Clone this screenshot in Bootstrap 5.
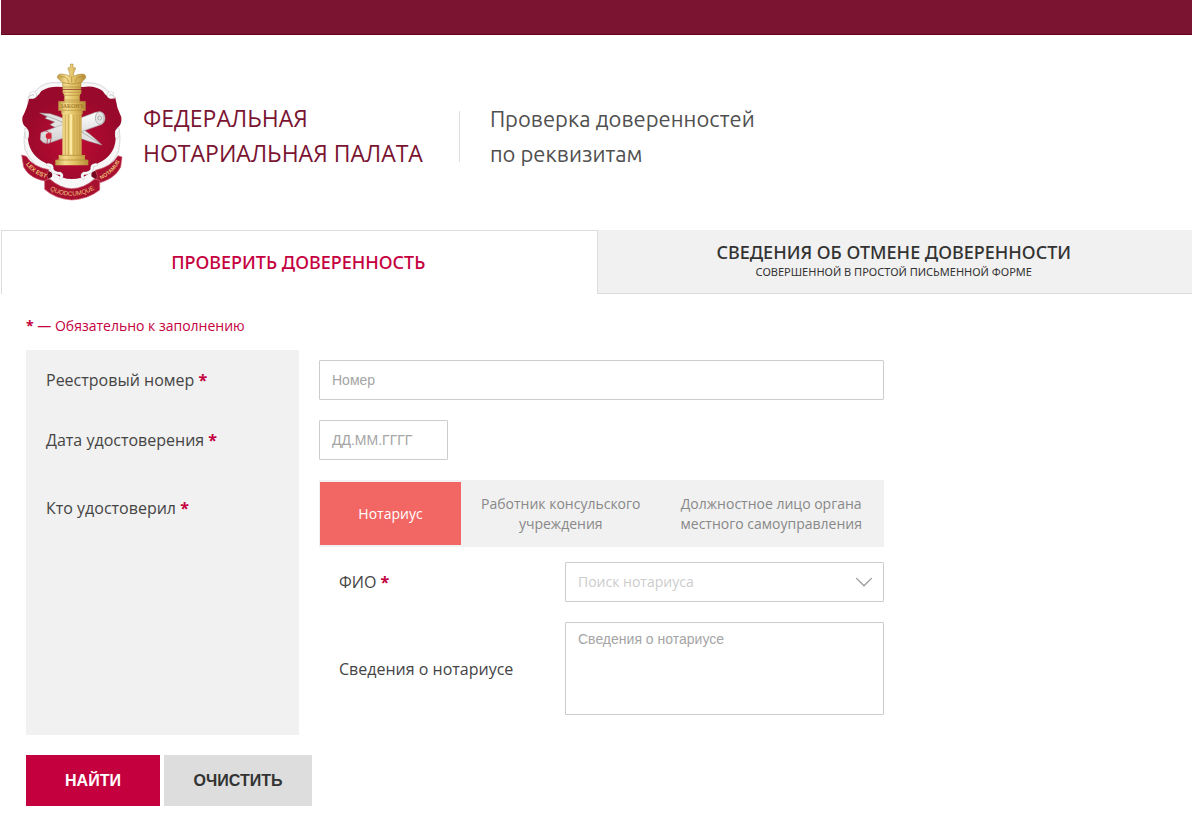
<!DOCTYPE html>
<html lang="ru">
<head>
<meta charset="utf-8">
<meta name="viewport" content="width=device-width, initial-scale=1">
<title>Проверка доверенностей по реквизитам</title>
<link href="https://cdn.jsdelivr.net/npm/bootstrap@5.3.0/dist/css/bootstrap.min.css" rel="stylesheet">
<style>
  body { font-family: "Open Sans", "Noto Sans", sans-serif; color: #444; font-size: 16px; line-height: 20px; }
  .page { margin: 0 8px 0 1px; }
  .topbar { height: 35px; background: #7a1431; border-bottom: 1px solid #69001f; }
  .site-header { padding: 28px 19px 29px; }
  .crest { width: 104px; height: 138px; flex: none; }
  .heading { padding-top: 8px; margin-left: 19px; }
  .brand { color: #7a1431; font-size: 23px; line-height: 35px; padding-right: 36px; }
  .brand:hover { color: #7a1431; }
  .rule { width: 1px; height: 51px; background: #ddd; }
  .page-title { font-family: Ubuntu, "Noto Sans", sans-serif; font-size: 22px; line-height: 35px; font-weight: 400; color: #505050; margin-left: 30px; }
  .top-tabs .nav-link { min-height: 64px; padding: 0 2px 2px 0; color: #333; background: #f1f1f1; border: solid #ddd; border-width: 0 0 1px 1px; border-radius: 0; font-family: "Noto Sans", sans-serif; font-size: 18px; line-height: 22px; font-weight: 500; }
  .top-tabs .nav-link.active { color: #c5003e; background: #fff; border-width: 1px 0 0 1px; }
  .top-tabs .note { font-size: 11px; line-height: 18px; font-weight: 400; }
  .content { padding: 0 25px; }
  .hint { color: #c5003e; font-size: 14px; padding: 22px 0 14px; }
  .req { color: #c5003e; font-weight: 700; }
  .side-label { width: 273px; padding: 0 20px; background: #f1f1f1; flex: none; }
  .side-label label, .side-label span.caption { display: block; padding: 20px 0; }
  .fields { width: 565px; margin-left: 20px; padding: 10px 0 20px; }
  .fields .form-control, .fields .form-select { border: 1px solid #ccc; border-radius: 1px; font-family: "Liberation Sans", sans-serif; font-size: 14px; line-height: 20px; padding: 9px 12px; color: #444; }
  .fields .form-control::placeholder { color: #a5a5a5; }
  .fields .date-box { width: 129px; margin: 20px 0; }
  .fields .form-select { font-family: "Open Sans", sans-serif; color: #ccc; background-image: url("data:image/svg+xml,%3Csvg xmlns='http://www.w3.org/2000/svg' viewBox='0 0 16 10'%3E%3Cpath d='M1 1l7 7 7-7' fill='none' stroke='%23999' stroke-width='1.2'/%3E%3C/svg%3E"); background-size: 18px 11px; background-position: right 10px center; }
  .who { background: #f1f1f1; padding: 2px 1px; min-height: 67px; margin-bottom: 15px; }
  .who .btn { border: 0; border-radius: 0; font-size: 14px; line-height: 20px; color: #888; padding: 0 20px; flex: none; }
  .who .btn.active { background: #f26664; color: #fff; width: 141px; }
  .sub-label { width: 246px; padding-left: 20px; flex: none; }
  .info-row { margin-top: 20px; }
  .fields textarea.form-control { height: 93px; padding-top: 6px; resize: none; }
  .actions { padding: 20px 0 25px; }
  .actions .btn { border: 0; border-radius: 0; height: 51px; font: bold 16px/20px "Liberation Sans", sans-serif; background: #ddd; color: #333; width: 148px; }
  .actions .btn.find { background: #c5003e; color: #fff; width: 134px; }
</style>
</head>
<body>
<div class="page">
  <div class="topbar"></div>
  <header class="site-header d-flex align-items-center">
    <svg class="crest" viewBox="60 40 312 414" role="img" aria-label="Герб">
      <defs>
        <linearGradient id="gold"><stop offset="0" stop-color="#c09a45"/><stop offset=".3" stop-color="#f3dc8c"/><stop offset=".6" stop-color="#e0bf62"/><stop offset="1" stop-color="#b58c35"/></linearGradient>
        <radialGradient id="wine" cy=".6"><stop offset="0" stop-color="#c00c34"/><stop offset="1" stop-color="#98092b"/></radialGradient>
        <linearGradient id="silver" x2="0" y2="1"><stop offset="0" stop-color="#fff"/><stop offset="1" stop-color="#cfcfcf"/></linearGradient>
        <path id="arcL" d="M72 334Q90 372 148 389"/>
        <path id="arcC" d="M142 417Q215 461 292 415"/>
        <path id="arcR" d="M290 395Q344 374 366 322"/>
      </defs>
      <!-- shield and its scrolled frame -->
      <path d="M85 140Q100 136 110 120Q134 96 168 99H262Q298 98 322 122Q334 138 346 142L356 236Q364 262 356 304Q336 350 292 372Q268 415 215 420Q164 415 140 370Q96 345 75 300Q68 262 78 236Z" fill="#f7f7f7" stroke="#c4c4c4" stroke-width="2"/>
      <path d="M87 148Q112 147 124 124Q148 108 187 112H250Q284 106 308 124Q322 148 346 146Q350 175 364 203Q366 226 352 234Q341 246 347 268Q344 318 294 341Q275 350 266 372Q246 388 215 388Q184 387 166 372Q156 350 138 341Q90 318 84 270Q91 246 80 234Q65 226 67 203Q82 174 87 148Z" fill="url(#wine)"/>
      <g fill="none" stroke-linecap="round">
        <path d="M93 142q14 3 13-8-5-7-13-2M338 142q-14 3-13-8 5-7 13-2M77 240q8 8 3 22M354 240q-8 8-3 22M144 345q14 0 12 14 5 12 24 12 9 5 3 14M288 345q-14 0-12 14-5 12-24 12-9 5-3 14" stroke="#bbb" stroke-width="9"/>
        <path d="M93 142q14 3 13-8-5-7-13-2M338 142q-14 3-13-8 5-7 13-2M77 240q8 8 3 22M354 240q-8 8-3 22M144 345q14 0 12 14 5 12 24 12 9 5 3 14M288 345q-14 0-12 14-5 12-24 12-9 5-3 14" stroke="#fafafa" stroke-width="7"/>
      </g>
      <!-- quill and scroll -->
      <path d="M119 190L150 192Q235 215 306 286Q220 264 150 225L164 217L135 206L142 201Z" fill="#e2e2e2" stroke="#999" stroke-width="1.500"/>
      <path d="M128 194Q220 226 300 282" fill="none" stroke="#999" stroke-width="2"/>
      <path d="M123 249L287 188Q307 183 313 196Q319 213 306 224L145 281Q129 283 121 269Z" fill="url(#silver)" stroke="#aaa" stroke-width="2"/>
      <ellipse cx="299" cy="205" rx="13" ry="19" fill="#e4e4e4" stroke="#999" stroke-width="2"/>
      <circle cx="299" cy="205" r="6" fill="none" stroke="#999" stroke-width="2"/>
      <path d="M134 242l22 11M143 261l-2 22 8 4 5-25" fill="none" stroke="#b31533" stroke-width="2"/>
      <circle cx="146" cy="259" r="9" fill="#d12439"/>
      <!-- crowned column -->
      <path d="M188 100L172 84Q172 72 185 73Q202 74 209 80V70q-5-4 0-9h-5v-7h7v-11h8v11h7v7h-5q5 5 0 9v10Q232 73 246 73Q259 73 257 85L243 100V119H188Z" fill="url(#gold)" stroke="#a98236" stroke-width="1.500"/>
      <path d="M180 82q20-6 26 16M251 82q-20-6-26 16M215 80v18M188 99q28 8 55 0M190 112h52" fill="none" stroke="#ab8338" stroke-width="2"/>
      <path d="M188 121h56v9l-5 7v18h18v28h-9v11h-64v-11h-9v-28h18v-19l-5-7Z" fill="url(#gold)"/>
      <path d="M188 128h56M190 137h50M191 151h50M175 157h81M177 182h78" fill="none" stroke="#b58c3c" stroke-width="2"/>
      <text x="216" y="176" text-anchor="middle" font-family="Liberation Serif, serif" font-size="17" font-weight="bold" fill="#a47a2a">ЗАКОНЪ</text>
      <path d="M187 190h58v126h10v14h10v17H166v-17h10v-14h11Z" fill="url(#gold)"/>
      <path d="M196 194v122M205 194v122M222 194v122M231 194v122M239 194v122" stroke="#c09a45" stroke-width="2"/>
      <path d="M213 194v122" stroke="#fff0ae" stroke-width="5"/>
      <path d="M180 317h72M172 331h88" stroke="#b08638" stroke-width="2"/>
      <!-- motto ribbon -->
      <path d="M139 362q22 4 17 19l-22 14M291 362q-22 4-16 19l23 14" fill="#75051e"/>
      <path d="M65 316L79 320Q98 352 147 360L140 377 148 396Q90 390 71 352ZM366 322L354 318Q336 350 286 362L292 378 288 402Q344 390 362 352Z" fill="#a81030" stroke="#cf5c6f" stroke-width="2"/>
      <path d="M134 392L149 388Q181 416 215 417Q253 416 284 388L299 392V421Q263 449 215 451Q164 447 134 419Z" fill="#a81030" stroke="#cf5c6f" stroke-width="2"/>
      <g font-family="Liberation Sans, sans-serif" font-size="19" fill="#f0c478" text-anchor="middle">
        <text font-size="18" font-weight="bold"><textPath href="#arcL" startOffset="50%">LEX EST</textPath></text>
        <text><textPath href="#arcC" startOffset="50%">QUODCUMQUE</textPath></text>
        <text font-size="16" font-weight="bold"><textPath href="#arcR" startOffset="50%">NOTAMUS</textPath></text>
      </g>
    </svg>
    <div class="heading d-flex align-items-center">
      <a class="brand text-decoration-none" href="#">ФЕДЕРАЛЬНАЯ<br>НОТАРИАЛЬНАЯ ПАЛАТА</a>
      <div class="rule"></div>
      <h1 class="page-title mb-0">Проверка доверенностей<br>по реквизитам</h1>
    </div>
  </header>

  <nav class="top-tabs nav nav-justified">
    <a class="nav-link active w-50 d-flex align-items-center justify-content-center" href="#">ПРОВЕРИТЬ ДОВЕРЕННОСТЬ</a>
    <a class="nav-link w-50 d-flex flex-column align-items-center justify-content-center" href="#">СВЕДЕНИЯ ОБ ОТМЕНЕ ДОВЕРЕННОСТИ<span class="note">СОВЕРШЕННОЙ В ПРОСТОЙ ПИСЬМЕННОЙ ФОРМЕ</span></a>
  </nav>

  <form class="content">
    <div class="hint"><span class="req">*</span> — Обязательно к заполнению</div>
    <div class="d-flex">
      <div class="side-label">
        <label for="num">Реестровый номер <span class="req">*</span></label>
        <label for="date">Дата удостоверения <span class="req">*</span></label>
        <span class="caption mt-2" id="who">Кто удостоверил <span class="req">*</span></span>
      </div>
      <div class="fields">
        <input class="form-control" id="num" type="text" placeholder="Номер">
        <input class="form-control date-box" id="date" type="text" placeholder="ДД.ММ.ГГГГ">
        <div class="who d-flex" role="group" aria-labelledby="who">
          <button class="btn active" type="button">Нотариус</button>
          <button class="btn" type="button">Работник консульского<br>учреждения</button>
          <button class="btn" type="button">Должностное лицо органа<br>местного самоуправления</button>
        </div>
        <div class="d-flex align-items-center">
          <label class="sub-label" for="fio">ФИО <span class="req">*</span></label>
          <select class="form-select" id="fio"><option>Поиск нотариуса</option></select>
        </div>
        <div class="info-row d-flex align-items-center">
          <label class="sub-label" for="info">Сведения о нотариусе</label>
          <textarea class="form-control" id="info" placeholder="Сведения о нотариусе"></textarea>
        </div>
      </div>
    </div>
    <div class="actions d-flex gap-1">
      <button class="btn find" type="submit">НАЙТИ</button>
      <button class="btn" type="reset">ОЧИСТИТЬ</button>
    </div>
  </form>
</div>
<script src="https://cdn.jsdelivr.net/npm/bootstrap@5.3.0/dist/js/bootstrap.bundle.min.js"></script>
</body>
</html>
